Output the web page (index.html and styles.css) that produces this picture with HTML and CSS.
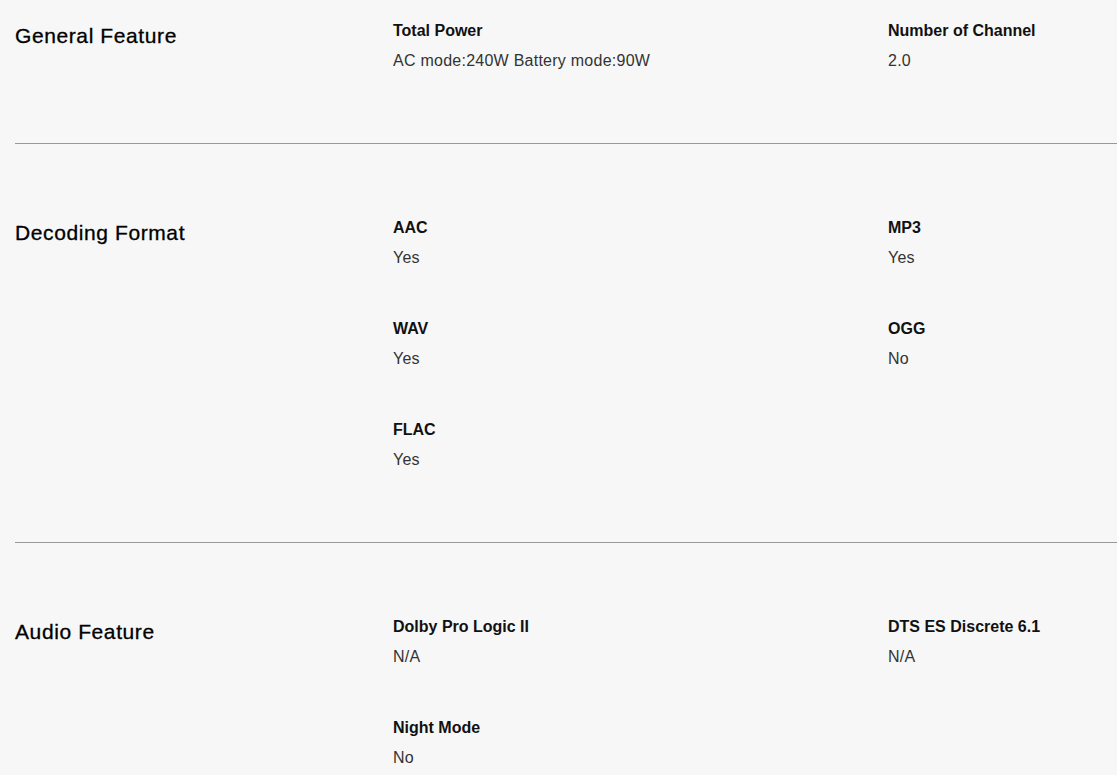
FILE: index.html
```html
<!DOCTYPE html>
<html lang="en">
<head>
<meta charset="utf-8">
<title>Specs</title>
<link rel="stylesheet" href="styles.css">
</head>
<body>
<div class="specs">
  <section class="spec-section first">
    <h2 class="spec-title">General Feature</h2>
    <div class="spec-items">
      <div class="spec-item"><div class="spec-label">Total Power</div><div class="spec-value">AC mode:240W Battery mode:90W</div></div>
      <div class="spec-item"><div class="spec-label">Number of Channel</div><div class="spec-value">2.0</div></div>
    </div>
  </section>
  <section class="spec-section">
    <h2 class="spec-title">Decoding Format</h2>
    <div class="spec-items">
      <div class="spec-item"><div class="spec-label">AAC</div><div class="spec-value">Yes</div></div>
      <div class="spec-item"><div class="spec-label">MP3</div><div class="spec-value">Yes</div></div>
      <div class="spec-item"><div class="spec-label">WAV</div><div class="spec-value">Yes</div></div>
      <div class="spec-item"><div class="spec-label">OGG</div><div class="spec-value">No</div></div>
      <div class="spec-item"><div class="spec-label">FLAC</div><div class="spec-value">Yes</div></div>
    </div>
  </section>
  <section class="spec-section">
    <h2 class="spec-title">Audio Feature</h2>
    <div class="spec-items">
      <div class="spec-item"><div class="spec-label">Dolby Pro Logic II</div><div class="spec-value">N/A</div></div>
      <div class="spec-item"><div class="spec-label">DTS ES Discrete 6.1</div><div class="spec-value">N/A</div></div>
      <div class="spec-item"><div class="spec-label">Night Mode</div><div class="spec-value">No</div></div>
    </div>
  </section>
</div>
</body>
</html>
```

FILE: styles.css
```css
html, body {
  margin: 0;
  padding: 0;
  background: #f7f7f7;
}
body {
  font-family: "Liberation Sans", Arial, sans-serif;
  color: #000;
  overflow: hidden;
}
.specs {
  padding-left: 15px;
}
.spec-section {
  display: grid;
  grid-template-columns: 378px 1fr;
  padding: 74px 0 72px;
  border-bottom: 1px solid #999;
}
.spec-section.first {
  padding-top: 21px;
  padding-bottom: 72px;
}
.spec-title {
  margin: 0;
  font-size: 21px;
  line-height: 30px;
  letter-spacing: 0.6px;
  font-weight: normal;
  color: #000;
  -webkit-text-stroke: 0.3px #000;
}
.spec-items {
  display: grid;
  grid-template-columns: 495px 1fr;
  row-gap: 51px;
}
.spec-label {
  font-size: 16px;
  line-height: 20px;
  font-weight: bold;
  color: #111;
  margin-bottom: 10px;
}
.spec-value {
  font-size: 16px;
  line-height: 20px;
  letter-spacing: 0.25px;
  color: #333;
}
```
